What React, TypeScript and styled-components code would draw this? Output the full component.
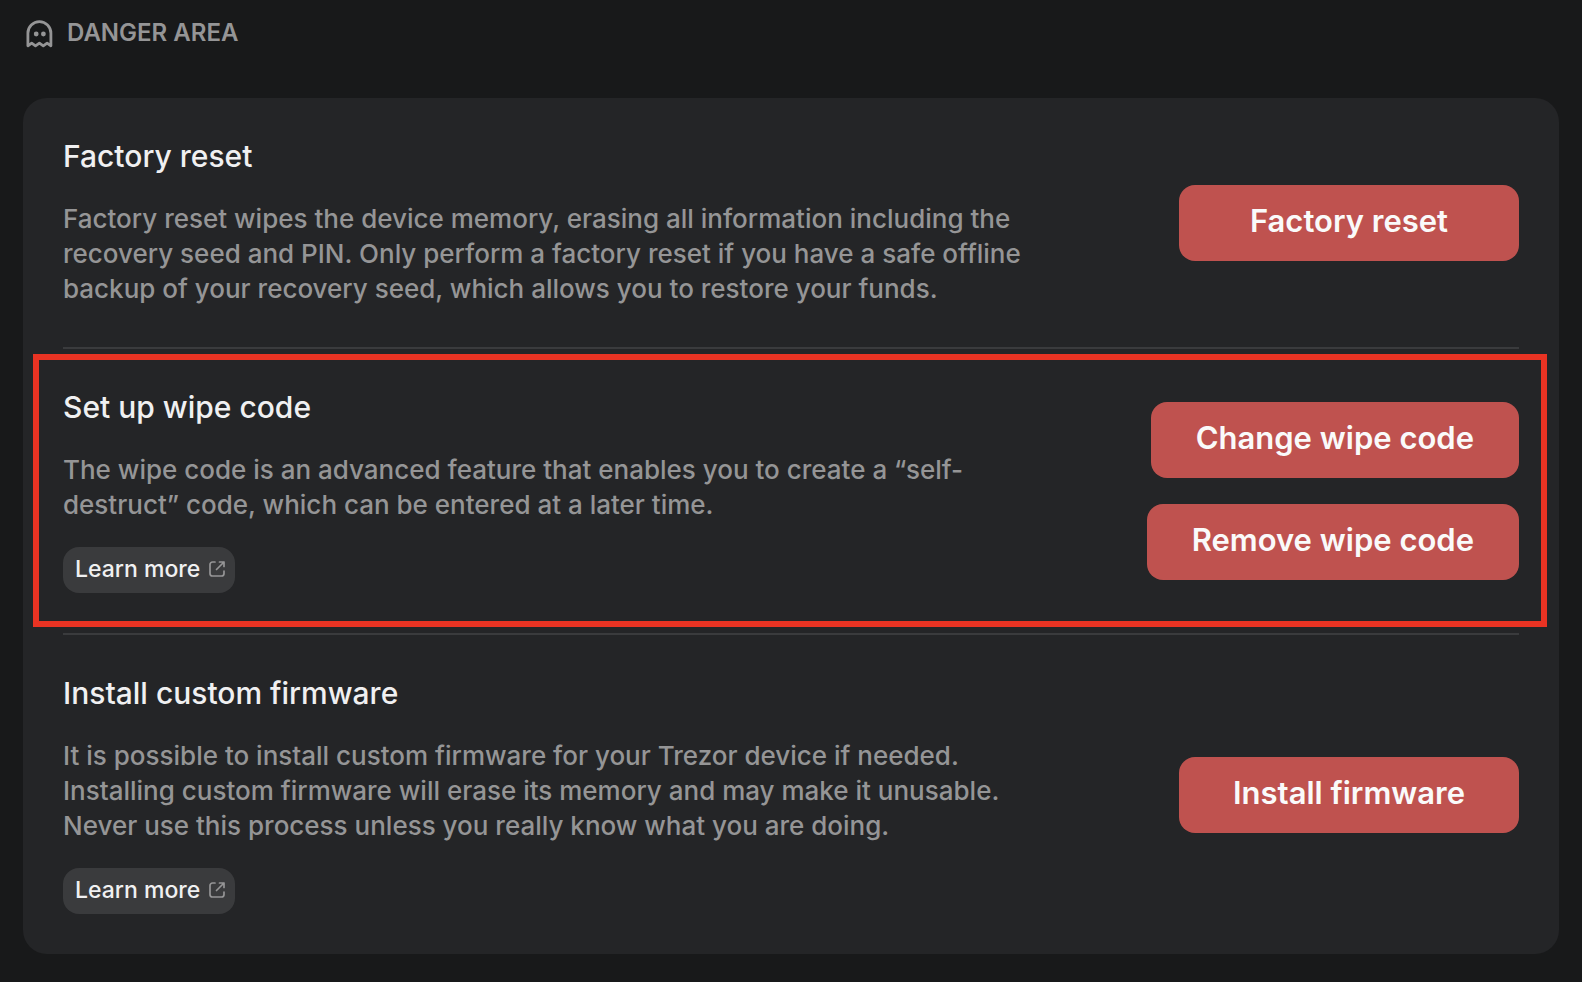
import React from "react";
import styled, { createGlobalStyle } from "styled-components";

const GlobalStyle = createGlobalStyle`
  *, *::before, *::after { box-sizing: border-box; }
  body {
    margin: 0;
    background: #18191a;
    font-family: Inter, "Liberation Sans", sans-serif;
  }
`;

const Page = styled.main`
  min-height: 100vh;
  padding: 15px 23px 28px;
`;

const SectionHeader = styled.header`
  display: flex;
  align-items: center;
  gap: 12px;
  height: 36px;
  margin-bottom: 47px;
  color: #959596;
`;

const SectionTitle = styled.h1`
  margin: 0;
  font-size: 24px;
  line-height: 32px;
  font-weight: 600;
  text-transform: uppercase;
`;

const Card = styled.section`
  padding: 0 40px;
  border-radius: 24px;
  background: #242527;
`;

const Row = styled.article<{ $marked?: boolean }>`
  position: relative;
  display: flex;
  align-items: center;
  justify-content: space-between;
  gap: 40px;
  padding: 40px 0;

  & + & {
    border-top: 2px solid #3a3b3d;
  }

  ${({ $marked }) =>
    $marked &&
    `&::after {
      content: "";
      position: absolute;
      inset: 5px -28px 6px -30px;
      border: 6px solid #e93323;
      pointer-events: none;
    }`}
`;

const Info = styled.div`
  flex: 0 1 980px;
  min-width: 0;
`;

const RowTitle = styled.h2`
  margin: 0 0 27px;
  color: #f0f0f1;
  font-size: 30px;
  line-height: 36px;
  font-weight: 500;
`;

const Description = styled.p`
  margin: 0 0 1px;
  color: #959596;
  font-size: 26px;
  line-height: 35px;
  font-weight: 500;
`;

const LearnMore = styled.a`
  display: inline-flex;
  align-items: center;
  gap: 8px;
  height: 46px;
  margin-top: 24px;
  padding: 0 9px 2px 12px;
  border-radius: 16px;
  background: #3a3b3d;
  color: #f0f0f1;
  font-size: 23px;
  line-height: 28px;
  font-weight: 500;
  text-decoration: none;
  vertical-align: top;
`;

const Actions = styled.div`
  display: flex;
  flex: none;
  flex-direction: column;
  align-items: flex-end;
  gap: 26px;
`;

const DangerButton = styled.button`
  min-width: 340px;
  height: 76px;
  padding: 0 45px 4px;
  border: 0;
  border-radius: 16px;
  background: #bf524f;
  color: #fafafa;
  font-family: inherit;
  font-size: 31px;
  line-height: 40px;
  font-weight: 600;
  cursor: pointer;
`;

const GhostIcon = () => (
  <svg width="32" height="32" viewBox="0 0 32 32" fill="none" aria-hidden="true">
    <path
      d="M4.900 28.800V16.200a11.500 11.500 0 0 1 23 0v12.600l-3.800-2.700-3.800 2.700-3.900-2.700-3.900 2.700-3.800-2.700z"
      stroke="currentColor"
      strokeWidth="2.800"
      strokeLinejoin="round"
    />
    <circle cx="13.200" cy="17" r="2.400" fill="currentColor" />
    <circle cx="20.400" cy="17" r="2.400" fill="currentColor" />
  </svg>
);

const ExternalLinkIcon = () => (
  <svg width="18" height="18" viewBox="0 0 18 18" fill="none" stroke="#959596" strokeWidth="1.700" aria-hidden="true">
    <path d="M7 2H4.500A2.500 2.500 0 0 0 2 4.500v9A2.500 2.500 0 0 0 4.500 16h9a2.500 2.500 0 0 0 2.500-2.500V11" strokeLinecap="round" />
    <path d="M11.500 2H16v4.500M16 2 8.500 9.500" strokeLinecap="round" strokeLinejoin="round" />
  </svg>
);

interface Setting {
  title: string;
  text: string;
  actions: string[];
  link?: boolean;
  marked?: boolean;
}

const settings: Setting[] = [
  {
    title: "Factory reset",
    text: "Factory reset wipes the device memory, erasing all information including the recovery seed and PIN. Only perform a factory reset if you have a safe offline backup of your recovery seed, which allows you to restore your funds.",
    actions: ["Factory reset"],
  },
  {
    title: "Set up wipe code",
    text: "The wipe code is an advanced feature that enables you to create a “self-destruct” code, which can be entered at a later time.",
    actions: ["Change wipe code", "Remove wipe code"],
    link: true,
    marked: true,
  },
  {
    title: "Install custom firmware",
    text: "It is possible to install custom firmware for your Trezor device if needed. Installing custom firmware will erase its memory and may make it unusable. Never use this process unless you really know what you are doing.",
    actions: ["Install firmware"],
    link: true,
  },
];

export default function App() {
  return (
    <>
      <GlobalStyle />
      <Page>
        <SectionHeader>
          <GhostIcon />
          <SectionTitle>Danger area</SectionTitle>
        </SectionHeader>
        <Card>
          {settings.map(({ title, text, actions, link, marked }) => (
            <Row key={title} $marked={marked}>
              <Info>
                <RowTitle>{title}</RowTitle>
                <Description>{text}</Description>
                {link && (
                  <LearnMore href="#">
                    Learn more
                    <ExternalLinkIcon />
                  </LearnMore>
                )}
              </Info>
              <Actions>
                {actions.map((label) => (
                  <DangerButton key={label} type="button">
                    {label}
                  </DangerButton>
                ))}
              </Actions>
            </Row>
          ))}
        </Card>
      </Page>
    </>
  );
}
